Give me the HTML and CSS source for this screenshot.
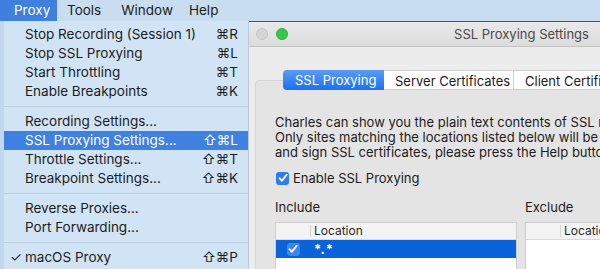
FILE: index.html
```html
<!DOCTYPE html>
<html lang="en">

<head>
    <meta charset="UTF-8">
    <meta name="viewport" content="width=device-width, initial-scale=1.0">
    <title>SSL Proxying Settings</title>
    <link rel="stylesheet" href="styles.css">
</head>

<body>
    <div class="screen">
        <div class="menubar">
            <span class="menu-title active">Proxy</span>
            <span class="menu-title">Tools</span>
            <span class="menu-title">Window</span>
            <span class="menu-title">Help</span>
        </div>

        <div class="desk">
            <div class="window">
                <div class="titlebar">
                    <div class="lights">
                        <span class="light close"></span>
                        <span class="light off"></span>
                        <span class="light zoom"></span>
                    </div>
                    <div class="title">SSL Proxying Settings</div>
                </div>
                <div class="content">
                    <div class="tabs">
                        <span class="tab selected">SSL Proxying</span>
                        <span class="tab">Server Certificates</span>
                        <span class="tab">Client Certificates</span>
                    </div>
                    <div class="panel">
                        <p class="intro">
                            Charles can show you the plain text contents of SSL requests and responses.<br>
                            Only sites matching the locations listed below will be proxied. Charles will issue<br>
                            and sign SSL certificates, please press the Help button for more information.
                        </p>
                        <label class="check-row">
                            <span class="checkbox"><svg width="10" height="10" viewBox="0 0 10 10"><path d="M1.5 5.2 L4 7.8 L8.6 1.8" fill="none" stroke="#fff" stroke-width="1.8" stroke-linecap="round" stroke-linejoin="round"/></svg></span>
                            Enable SSL Proxying
                        </label>
                        <div class="lists">
                            <div class="list include">
                                <div class="list-label">Include</div>
                                <div class="table">
                                    <div class="thead">
                                        <span class="col-check"></span>
                                        <span class="col-loc">Location</span>
                                    </div>
                                    <div class="trow selected">
                                        <span class="col-check"><span class="row-box"><svg width="10" height="10" viewBox="0 0 10 10"><path d="M1.5 5.2 L4 7.8 L8.6 1.8" fill="none" stroke="#fff" stroke-width="1.8" stroke-linecap="round" stroke-linejoin="round"/></svg></span></span>
                                        <span class="col-loc star">*.*</span>
                                    </div>
                                    <div class="trow"></div>
                                </div>
                            </div>
                            <div class="list exclude">
                                <div class="list-label">Exclude</div>
                                <div class="table">
                                    <div class="thead">
                                        <span class="col-check"></span>
                                        <span class="col-loc">Location</span>
                                    </div>
                                    <div class="trow"></div>
                                    <div class="trow"></div>
                                </div>
                            </div>
                        </div>
                    </div>
                </div>
            </div>
        </div>

        <div class="dropdown">
            <div class="item"><span>Stop Recording (Session 1)</span><span class="key">⌘R</span></div>
            <div class="item"><span>Stop SSL Proxying</span><span class="key">⌘L</span></div>
            <div class="item"><span>Start Throttling</span><span class="key">⌘T</span></div>
            <div class="item"><span>Enable Breakpoints</span><span class="key">⌘K</span></div>
            <div class="sep"></div>
            <div class="item"><span>Recording Settings...</span></div>
            <div class="item hl"><span>SSL Proxying Settings...</span><span class="key">⇧⌘L</span></div>
            <div class="item"><span>Throttle Settings...</span><span class="key">⇧⌘T</span></div>
            <div class="item"><span>Breakpoint Settings...</span><span class="key">⇧⌘K</span></div>
            <div class="sep"></div>
            <div class="item"><span>Reverse Proxies...</span></div>
            <div class="item"><span>Port Forwarding...</span></div>
            <div class="sep"></div>
            <div class="item"><span class="tick">✓</span><span>macOS Proxy</span><span class="key">⇧⌘P</span></div>
        </div>
    </div>
</body>

</html>
```

FILE: styles.css
```css
body {
    margin: 0;
    font-family: Inter, "Noto Sans", sans-serif;
    color: #1c1c1c;
}

.screen {
    position: relative;
    width: 600px;
    height: 269px;
    overflow: hidden;
    background: #ececec;
}

/* menu bar */

.menubar {
    display: flex;
    height: 21px;
    background: #c8ddf0;
    font-size: 13.5px;
    line-height: 21px;
}

.menu-title {
    padding: 0 10px;
}

.menu-title.active {
    background: #3f80df;
    color: white;
    padding: 0 8px 0 14px;
    width: 35px;
}

.menu-title:nth-child(3) {
    padding: 0 6px 0 10px;
}

.desk {
    background: #34577f;
    padding: 1px 0 0 229px;
    height: 247px;
}

/* window */

.window {
    width: 582px;
    height: 100%;
    background: #ececec;
}

.titlebar {
    position: relative;
    height: 24px;
    background: linear-gradient(#e9e9e9, #dcdcdc);
    border-bottom: 1px solid #c4c4c4;
    display: flex;
    align-items: center;
}

.lights {
    display: flex;
    gap: 8px;
    padding-left: 7px;
}

.light {
    width: 12px;
    height: 12px;
    border-radius: 50%;
    box-sizing: border-box;
}

.light.close {
    background: #fc5b57;
}

.light.off {
    background: #d5d5d5;
    border: 1px solid #c6c6c6;
}

.light.zoom {
    background: #35c748;
    border: 1px solid #2fb13f;
}

.title {
    flex: 1;
    text-align: center;
    font-size: 13px;
    color: #4a4a4a;
    padding-right: 56px;
}

.content {
    padding: 23px 0 0 26px;
}

.tabs {
    position: relative;
    z-index: 1;
    display: flex;
    margin: 0 0 -10px 28px;
    height: 20px;
    font-size: 13px;
    line-height: 20px;
}

.tab {
    background: white;
    padding: 0 11px;
    border: 1px solid #cfcfcf;
    border-left: none;
    box-sizing: border-box;
    white-space: nowrap;
}

.tab.selected {
    background: linear-gradient(#5a9cf6, #1d6ff0);
    color: white;
    border: none;
    border-radius: 4px 0 0 4px;
    padding: 0 12px;
    width: 101px;
}

.tab:nth-child(2) {
    width: 130px;
}

.panel {
    background: #e4e4e4;
    border: 1px solid #d6d6d6;
    border-radius: 4px;
    padding: 34px 0 0 19px;
    height: 200px;
    font-size: 13px;
}

.intro {
    margin: 0;
    line-height: 15px;
    white-space: nowrap;
}

.check-row {
    display: flex;
    align-items: center;
    gap: 4px;
    height: 18px;
    margin-top: 9px;
    padding-left: 1px;
}

.checkbox {
    display: flex;
    align-items: center;
    justify-content: center;
    width: 13px;
    height: 13px;
    border-radius: 3px;
    background: #2f7cf2;
}

.lists {
    display: flex;
    gap: 8px;
    margin-top: 12px;
}

.list-label {
    line-height: 16px;
    margin-bottom: 7px;
}

.include {
    width: 242px;
    flex: none;
}

.exclude {
    flex: 1;
}

.table {
    background: white;
    border: 1px solid #cdcdcd;
    border-bottom: none;
}

.thead {
    display: flex;
    height: 16px;
    line-height: 16px;
    background: #f3f3f3;
    border-bottom: 1px solid #d8d8d8;
    font-size: 12px;
    color: #2a2a2a;
}

.col-check {
    width: 34px;
    flex: none;
    display: flex;
    align-items: center;
    justify-content: center;
    border-right: 1px solid #d4d4d4;
    margin: 2px 0;
}

.thead .col-check {
    height: 12px;
}

.col-loc {
    padding-left: 3px;
}

.trow {
    display: flex;
    height: 18px;
    align-items: center;
}

.trow .col-check {
    border: none;
}

.trow.selected {
    background: #0a63d8;
    color: white;
}

.row-box {
    display: flex;
    align-items: center;
    justify-content: center;
    width: 13px;
    height: 13px;
    border-radius: 3px;
    background: #3a86ec;
}

.star {
    font-weight: 700;
    letter-spacing: 1px;
    padding-left: 4px;
}

/* dropdown menu */

.dropdown {
    position: absolute;
    top: 21px;
    left: 0;
    width: 244px;
    height: 248px;
    padding-top: 4px;
    background: #d1e4f5;
    border-left: 4px solid #c3d8ec;
    box-shadow: 1px 0 0 #b7cbdf;
    font-size: 13.5px;
}

.item {
    position: relative;
    display: flex;
    height: 19px;
    line-height: 19px;
    padding: 0 10px 0 21px;
}

.item .key {
    margin-left: auto;
}

.item.hl {
    background: #3f81e0;
    color: white;
}

.tick {
    position: absolute;
    left: 6px;
}

.sep {
    height: 1px;
    margin: 5px 0;
    background: #bccfe2;
}
```
